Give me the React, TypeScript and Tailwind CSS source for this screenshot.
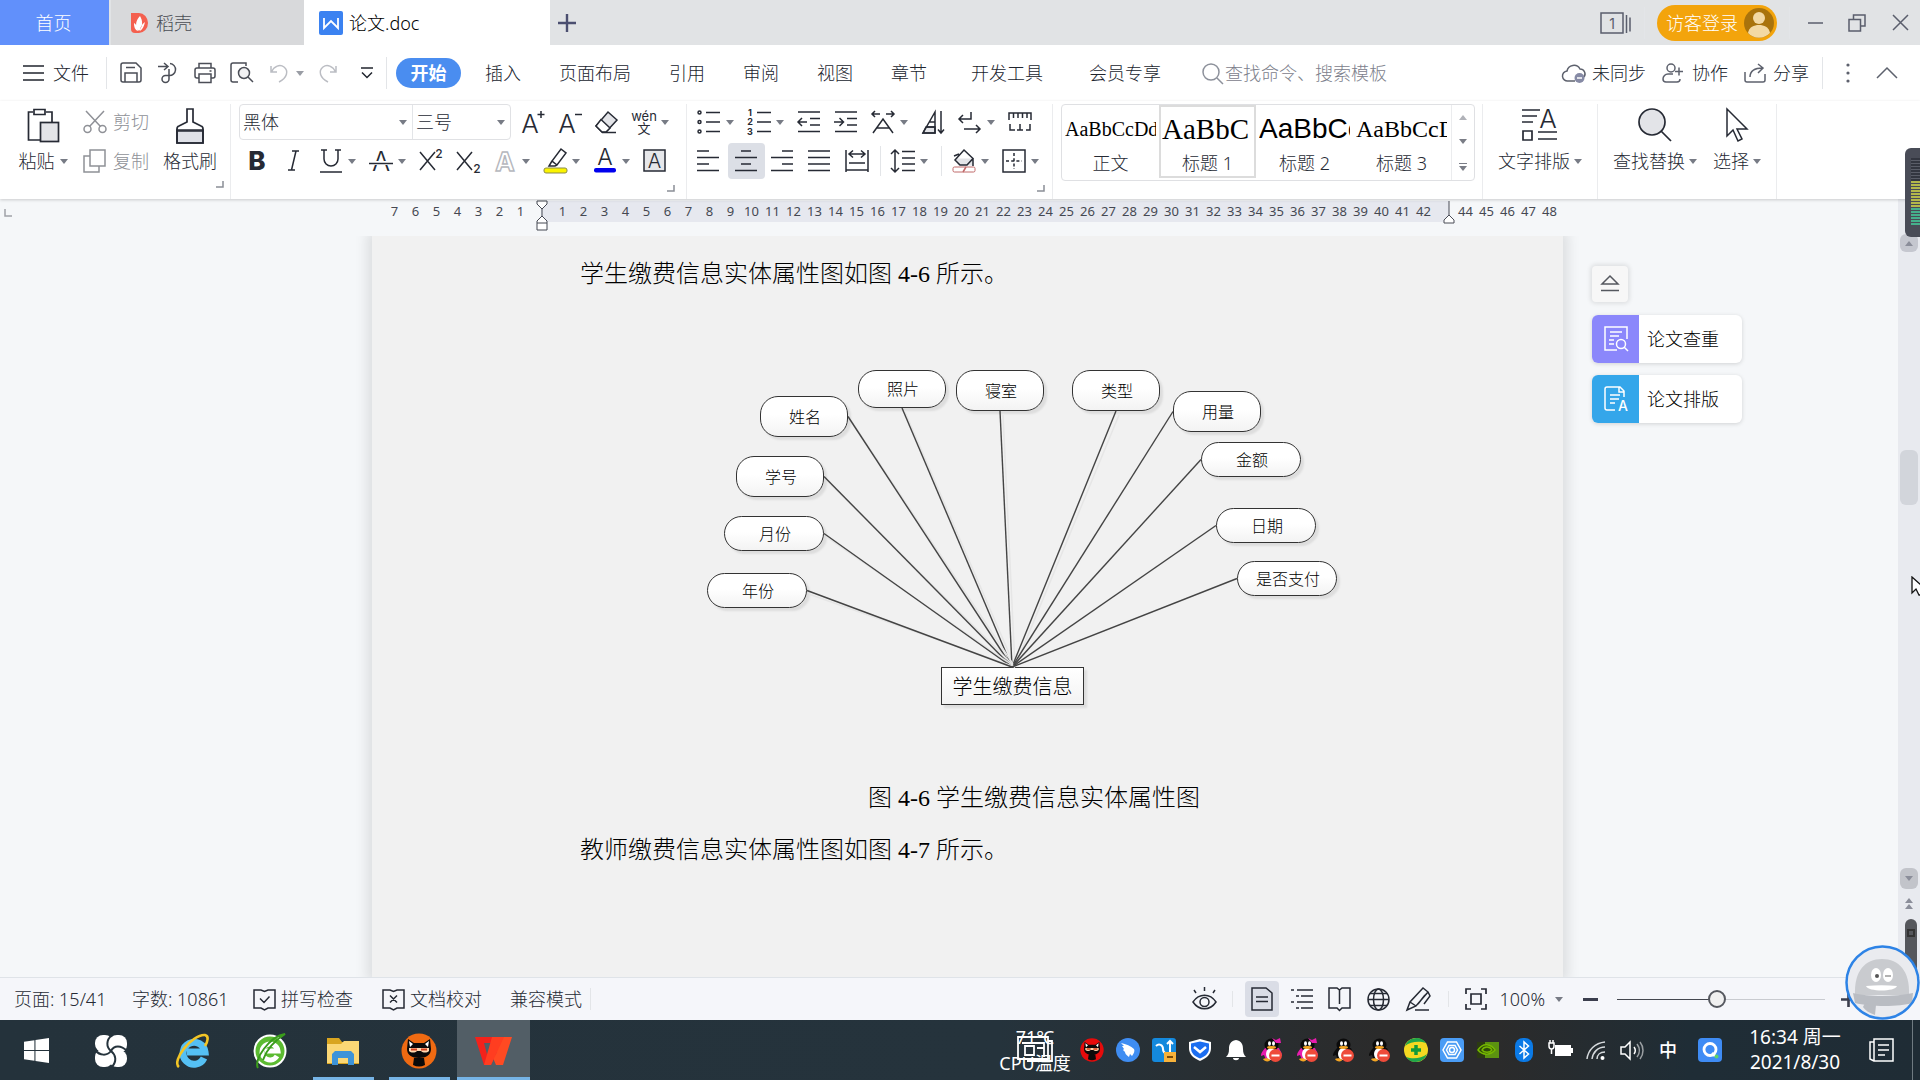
import React, { useState } from "react";

type Kids = { children?: React.ReactNode };

/* ---------- small building blocks ---------- */

function Ic({ children, w = 24, h = 24, sw = 1.5, cls = "" }: Kids & { w?: number; h?: number; sw?: number; cls?: string }) {
  return (
    <svg width={w} height={h} viewBox={`0 0 ${w} ${h}`} fill="none" stroke="currentColor" strokeWidth={sw} className={"shrink-0 overflow-visible " + cls} aria-hidden="true">
      {children}
    </svg>
  );
}

function Glyph({ x, y, size, children, weight = 400, family = "Inter", color = "currentColor", italic = false, anchor = "middle" }: Kids & {
  x: number; y: number; size: number; weight?: number; family?: string; color?: string; italic?: boolean; anchor?: "middle" | "start";
}) {
  return (
    <text x={x} y={y} fontSize={size} fontWeight={weight} fontFamily={`${family}, 'Noto Sans CJK SC', sans-serif`} fill={color} stroke="none" textAnchor={anchor} fontStyle={italic ? "italic" : "normal"}>
      {children}
    </text>
  );
}

function Caret({ cls = "text-[#777b85]" }: { cls?: string }) {
  return (
    <svg width="8" height="5" viewBox="0 0 8 5" className={"shrink-0 " + cls} aria-hidden="true">
      <path d="M0 0h8L4 5z" fill="currentColor" />
    </svg>
  );
}

function Tool({ label, children, caret = false, active = false }: Kids & { label: string; caret?: boolean; active?: boolean }) {
  return (
    <button
      type="button"
      aria-label={label}
      aria-pressed={active}
      className={"flex h-9 shrink-0 items-center gap-[5px] rounded-sm pl-[6px] " + (caret ? "w-[50px] " : "w-[37px] ") + (active ? "bg-[#dcdfe6]" : "")}
    >
      {children}
      {caret && <Caret />}
    </button>
  );
}

function Launcher() {
  return (
    <button type="button" aria-label="更多设置" className="text-[#8b8e96]">
      <Ic w={8} h={7} sw={1.5}><path d="M7 0v6H0" /></Ic>
    </button>
  );
}

function Sep({ cls }: { cls: string }) {
  return <span className={"w-px shrink-0 bg-[#e3e5e8] " + cls} />;
}

/* ---------- title bar ---------- */

function TitleBar() {
  return (
    <header className="flex h-[45px] shrink-0 bg-[#e1e3e5]">
      <button type="button" className="w-[109px] bg-[#6190fb] pr-[2px] text-white">首页</button>
      <button type="button" className="ml-[2px] flex w-[193px] items-center gap-2 bg-[#d8d9db] pl-[19px] text-[#4a4d55]">
        <Ic w={18} h={22}>
          <path d="M1 1h8a9 10 0 0 1 0 20H5a4 4 0 0 1-4-4z" fill="#f4604f" stroke="none" />
          <path d="M9 19C5 15 5 9 10 4c3 5 3 10-1 15zM8 19c-3-1-4-4-4-8 2 1 3 3 4 8zM10 19c3-2 4-5 5-9-3 2-5 5-5 9z" fill="#fff" stroke="none" />
        </Ic>
        稻壳
      </button>
      <button type="button" className="flex w-[246px] items-center gap-[6px] bg-white pl-[15px] text-black">
        <Ic w={24} h={24} sw={1.8}>
          <rect width="24" height="24" rx="2" fill="#3b82f1" stroke="none" />
          <path d="M5 7v10l7-7 7 7V7" stroke="#fff" />
        </Ic>
        论文.doc
      </button>
      <button type="button" aria-label="新建标签" className="ml-2 text-[#4b4f70]">
        <Ic w={18} h={18} sw={2.4}><path d="M9 0v18M0 9h18" /></Ic>
      </button>
      <div className="ml-auto flex items-center text-[#5a5e6c]">
        <button type="button" aria-label="窗口列表" className="mr-[13px]">
          <Ic w={31} h={22}>
            <path d="M1 1h22v20H1zM26.500 3v18M30 5.500v14" />
            <Glyph x={12} y={16.500} size={14}>1</Glyph>
          </Ic>
        </button>
        <Sep cls="h-8 bg-[#d3d5d8]" />
        <button type="button" className="ml-3 flex h-9 w-[120px] items-center gap-[6px] rounded-full bg-[#f3a40c] pl-[9px] text-white">
          访客登录
          <Ic w={30} h={30}>
            <circle cx="15" cy="15" r="15" fill="#a9730c" stroke="none" />
            <circle cx="15" cy="10" r="6" fill="#f3d9a4" stroke="none" />
            <path d="M4 25c1-6 6-8 11-8s10 2 11 8a15 15 0 0 1-22 0z" fill="#f3d9a4" stroke="none" />
          </Ic>
        </button>
        <Sep cls="ml-3 h-8 bg-[#d3d5d8]" />
        <button type="button" aria-label="最小化" className="ml-[18px]"><Ic w={16} h={18}><path d="M0 9h15" /></Ic></button>
        <button type="button" aria-label="还原" className="ml-6"><Ic w={18} h={18}><path d="M1 5.500h11.500V17H1zM5.500 5.500V1H17v11h-4.500" /></Ic></button>
        <button type="button" aria-label="关闭" className="mr-[11px] ml-[26px]"><Ic w={17} h={17}><path d="M1 1l15 15M16 1L1 16" /></Ic></button>
      </div>
    </header>
  );
}

/* ---------- menu row ---------- */

const menus: [string, string][] = [
  ["插入", "ml-6"], ["页面布局", "ml-[38px]"], ["引用", "ml-[38px]"], ["审阅", "ml-[38px]"], ["视图", "ml-[38px]"],
  ["章节", "ml-[38px]"], ["开发工具", "ml-[44px]"], ["会员专享", "ml-[46px]"],
];

function MenuRow() {
  return (
    <nav className="flex h-14 shrink-0 items-center bg-white text-[#20242e]">
      <button type="button" className="ml-[23px] flex items-center gap-[9px]">
        <Ic w={21} h={18}><path d="M0 2h21M0 9h21M0 16h21" /></Ic>文件
      </button>
      <Sep cls="ml-[17px] h-8" />
      <div className="flex items-center gap-[14px] pl-[13px] text-[#4b4e57]">
        <button type="button" aria-label="保存">
          <Ic w={22} h={22}><path d="M4 1h12l5 5v12a2 2 0 0 1-2 2H3a2 2 0 0 1-2-2V3a2 2 0 0 1 2-2zM5 20v-9h12v9M6 5.500h9" /></Ic>
        </button>
        <button type="button" aria-label="输出为PDF">
          <Ic w={24} h={22}><path d="M2 4.500h9M8 1l4 3.500L8 8M14 1.500a6 6 0 1 1-1 12H9.500a3.500 3.500 0 1 0 3.500 3.500V7" /></Ic>
        </button>
        <button type="button" aria-label="打印">
          <Ic w={22} h={22}><path d="M5 6V1.500h12V6M5 16H3a2 2 0 0 1-2-2V8a2 2 0 0 1 2-2h16a2 2 0 0 1 2 2v6a2 2 0 0 1-2 2h-2M5 12h12v8.500H5zM15.500 9h2" /></Ic>
        </button>
        <button type="button" aria-label="打印预览">
          <Ic w={24} h={22}><path d="M8 20H3a2 2 0 0 1-2-2V3a2 2 0 0 1 2-2h13v3M18 15l5 5" /><circle cx="14" cy="11" r="5.500" fill="#f1f1f3" /></Ic>
        </button>
      </div>
      <button type="button" aria-label="撤销" className="ml-4 flex items-center gap-[8px] text-[#bbbdc3]">
        <Ic w={18} h={20}><path d="M1 3v6h6M1.500 9C4 3 10 1 14 4c5 4 3 11-5 15" /></Ic><Caret cls="text-[#9a9da5]" />
      </button>
      <button type="button" aria-label="恢复" className="ml-[15px] text-[#bbbdc3]">
        <Ic w={18} h={20}><path d="M17 3v6h-6M16.500 9C14 3 8 1 4 4c-5 4-3 11 5 15" /></Ic>
      </button>
      <button type="button" aria-label="自定义快速访问工具栏" className="ml-6"><Ic w={12} h={12}><path d="M0 1h12M1 5.500l5 5 5-5" /></Ic></button>
      <Sep cls="ml-[13px] h-8" />
      <button type="button" className="ml-[9px] h-[30px] w-[65px] rounded-full bg-[#4a8df0] font-bold text-white">开始</button>
      {menus.map(([m, c]) => <button key={m} type="button" className={"shrink-0 " + c}>{m}</button>)}
      <label className="ml-[41px] flex min-w-0 flex-1 items-center gap-[2px] text-[#8d919b]">
        <Ic w={21} h={21}><circle cx="9" cy="9" r="8" /><path d="M15 15l6 6" /></Ic>
        <span className="sr-only">查找</span>
        <input placeholder="查找命令、搜索模板" className="w-full min-w-0 bg-transparent outline-none placeholder:text-[#7c808b]" />
      </label>
      <button type="button" className="ml-auto flex shrink-0 items-center gap-[6px]">
        <Ic w={24} h={20}>
          <path d="M13 18H6A5 5 0 0 1 5 8a7 7 0 0 1 13-2 5 5 0 0 1 4 8" stroke="#5d616d" />
          <circle cx="17.500" cy="15" r="5" fill="#868aa5" stroke="none" /><path d="M15 15h5" stroke="#fff" />
        </Ic>未同步
      </button>
      <button type="button" className="ml-4 flex shrink-0 items-center gap-2">
        <Ic w={22} h={20} cls="text-[#5d616d]"><circle cx="9" cy="5" r="4" /><path d="M17 4.500v8M13 8.500h8M11 11H6a5 5 0 0 0-5 5c0 2 1 3 3 3h11a3 3 0 0 0 3-3" /></Ic>协作
      </button>
      <button type="button" className="ml-4 flex shrink-0 items-center gap-[7px]">
        <Ic w={22} h={20} cls="text-[#5d616d]"><path d="M1 9v8a2 2 0 0 0 2 2h16a2 2 0 0 0 2-2v-6M6 14c0-6 4-9 13-9M14 1l5 4-5 5" /></Ic>分享
      </button>
      <Sep cls="ml-[13px] h-8" />
      <button type="button" aria-label="更多" className="ml-[23px]">
        <svg width="4" height="20" viewBox="0 0 4 20" fill="#5d616d" aria-hidden="true"><circle cx="2" cy="2" r="1.600" /><circle cx="2" cy="10" r="1.600" /><circle cx="2" cy="18" r="1.600" /></svg>
      </button>
      <button type="button" aria-label="收起功能区" className="mr-[22px] ml-[26px] text-[#5d616d]"><Ic w={22} h={12}><path d="M1 11L11 1l10 10" /></Ic></button>
    </nav>
  );
}

/* ---------- ribbon ---------- */

function Lines({ rows }: { rows: [number, number][] }) {
  return <path d={rows.map(([a, b], i) => `M${a} ${2 + i * 6.500}H${b}`).join("")} />;
}

const samples: { text: string; label: string; cls: string }[] = [
  { text: "AaBbCcDd", label: "正文", cls: "font-[Liberation_Serif] text-[20px]" },
  { text: "AaBbC", label: "标题 1", cls: "font-[Liberation_Serif] text-[29px]" },
  { text: "AaBbCc", label: "标题 2", cls: "font-[Liberation_Sans] text-[28px]" },
  { text: "AaBbCcD", label: "标题 3", cls: "font-[Liberation_Serif] text-[24px]" },
];

function FontPick({ label, value, options, w }: { label: string; value: string; options: string[]; w: string }) {
  return (
    <label className={"relative flex h-full items-center " + w}>
      <span className="sr-only">{label}</span>
      <select defaultValue={value} className="h-full w-full appearance-none bg-transparent pl-[3px] outline-none">
        {options.map((o) => <option key={o}>{o}</option>)}
      </select>
      <span className="pointer-events-none absolute right-[5px]"><Caret /></span>
    </label>
  );
}

function Ribbon() {
  const [style, setStyle] = useState("标题 1");
  return (
    <section className="z-10 flex h-[98px] shrink-0 bg-white pt-[3px] text-[#262a34] shadow-[0_1px_3px_rgba(0,0,0,0.18)]">
      {/* clipboard */}
      <div className="flex w-[231px] shrink-0 border-r border-[#ebecee]">
        <button type="button" className="ml-[18px] flex w-[50px] flex-col items-center pt-1">
          <Ic w={34} h={36} sw={1.700}>
            <path d="M7 4H2.500v28H14M20 4h6v10M8 1.500h11v5H8z" /><rect x="14.500" y="14.500" width="18" height="19" fill="#e3e4e8" />
          </Ic>
          <span className="flex items-center gap-[5px] whitespace-nowrap pt-[5px]">粘贴<Caret /></span>
        </button>
        <div className="ml-[15px] flex flex-col gap-[3px] text-[#8f9197]">
          <button type="button" className="flex h-9 items-center gap-[6px]">
            <Ic w={24} h={24}><circle cx="4.500" cy="19" r="3.500" /><circle cx="19.500" cy="19" r="3.500" /><path d="M3 1l14.500 15.500M21 1L6.500 16.500" /></Ic>剪切
          </button>
          <button type="button" className="flex h-9 items-center gap-[6px]">
            <Ic w={24} h={24}><path d="M7 1h15v16H7zM7 7H1v16h15v-6" /></Ic>复制
          </button>
        </div>
        <button type="button" className="ml-[14px] flex flex-col items-center pt-1">
          <Ic w={28} h={36} sw={1.700}>
            <path d="M1 22h26v13H1z" fill="#dfe1e8" /><path d="M11 1h6v13l8 4a3 3 0 0 1 2 3v14H1V21a3 3 0 0 1 2-3l8-4zM1 23h26" />
          </Ic>
          <span className="pt-[5px]">格式刷</span>
        </button>
        <div className="-ml-px self-end pb-[6px]"><Launcher /></div>
      </div>

      {/* font */}
      <div className="w-[456px] shrink-0 border-r border-[#ebecee] pl-2">
        <div className="flex">
          <div className="flex h-9 w-[272px] rounded-sm border border-[#e0e1e4]">
            <FontPick label="字体" value="黑体" options={["黑体", "宋体"]} w="w-[172px]" />
            <Sep cls="h-full" />
            <FontPick label="字号" value="三号" options={["三号", "四号"]} w="flex-1" />
          </div>
          <span className="w-1" />
          <Tool label="增大字号"><Ic><Glyph x={9} y={23} size={26} weight={300}>A</Glyph><path d="M20 1v7M16.500 4.500h7" /></Ic></Tool>
          <Tool label="减小字号"><Ic><Glyph x={9} y={23} size={26} weight={300}>A</Glyph><path d="M17 4.500h7" /></Ic></Tool>
          <Tool label="清除格式"><Ic><path d="M13 2l9 8-11 12H7l-6-6z" fill="#e3e4e8" /><path d="M6 9.500l9 8.500-4 4H7l-6-6z" fill="#fff" /><path d="M7 22.500h14" /></Ic></Tool>
          <Tool label="拼音指南" caret>
            <span className="flex w-6 flex-col items-center text-[13px] leading-3 font-normal"><span className="font-[Inter]">wén</span><span>文</span></span>
          </Tool>
        </div>
        <div className="mt-[3px] flex">
          <Tool label="加粗"><Ic><Glyph x={12} y={21} size={26} weight={800}>B</Glyph></Ic></Tool>
          <Tool label="倾斜"><Ic><path d="M10 2h7M6 21h7M14 2L9.500 21" /></Ic></Tool>
          <Tool label="下划线" caret><Ic><path d="M5 1v9a7 7 0 0 0 14 0V1M2 1h6M16 1h6M1 23h22" /></Ic></Tool>
          <Tool label="删除线" caret><Ic><Glyph x={12} y={22} size={27} weight={300}>A</Glyph><rect x="3" y="12" width="18" height="4" fill="#fff" stroke="none" /><path d="M0 14.500h24" /></Ic></Tool>
          <Tool label="上标"><Ic><path d="M1 3l15 18M16 3L1 21" /><Glyph x={20} y={9} size={12} weight={500}>2</Glyph></Ic></Tool>
          <Tool label="下标"><Ic><path d="M1 3l15 18M16 3L1 21" /><Glyph x={21} y={24} size={12} weight={500}>2</Glyph></Ic></Tool>
          <Tool label="文字效果" caret><Ic cls="text-[#b5b7bd]"><text x="12" y="22" fontSize="26" fontWeight="700" fontFamily="Inter, sans-serif" textAnchor="middle" fill="#fff" stroke="currentColor" strokeWidth="1.400">A</text></Ic></Tool>
          <Tool label="突出显示" caret><Ic><path d="M18 0l5 4-9 12-5-4zM9 12l-3 5h6l2-1" /><rect x="1" y="19" width="23" height="5" rx="2" fill="#fbf400" stroke="#8b8b4a" strokeWidth="1" /></Ic></Tool>
          <Tool label="字体颜色" caret><Ic><Glyph x={12} y={16} size={23} weight={300}>A</Glyph><rect x="1" y="19" width="22" height="4.500" rx="2" fill="#0000ee" stroke="none" /></Ic></Tool>
          <Tool label="字符底纹"><Ic><rect x="1" y="1" width="21" height="21" fill="#e6e7ea" /><Glyph x={11.500} y={19} size={20} weight={300}>A</Glyph></Ic></Tool>
        </div>
        <div className="flex justify-end pr-[11px] pt-[6px]"><Launcher /></div>
      </div>

      {/* paragraph */}
      <div className="w-[366px] shrink-0 border-r border-[#ebecee] pl-1">
        <div className="flex">
          <Tool label="项目符号" caret><Ic><circle cx="2.500" cy="2.500" r="1.500" /><circle cx="2.500" cy="12" r="1.500" /><circle cx="2.500" cy="21.500" r="1.500" /><path d="M9 2.500h14M9 12h14M9 21.500h14" /></Ic></Tool>
          <Tool label="编号" caret><Ic><Glyph x={3} y={6} size={9} weight={700}>1</Glyph><Glyph x={3} y={15} size={9} weight={700}>2</Glyph><Glyph x={3} y={25} size={9} weight={700}>3</Glyph><path d="M10 2.500h14M10 12h14M10 21.500h14" /></Ic></Tool>
          <Tool label="减少缩进"><Ic><path d="M1 2h22M13 8.500h10M13 15h10M1 21.500h22M1 12h9M5 8l-4 4 4 4" /></Ic></Tool>
          <Tool label="增加缩进"><Ic><path d="M1 2h22M13 8.500h10M13 15h10M1 21.500h22M0 12h9M5.500 8l4 4-4 4" /></Ic></Tool>
          <Tool label="中文版式" caret><Ic><path d="M1 4h8M4 1L1 4l3 3M15 4h8M20 1l3 3-3 3M2 23L12 9l10 14M6 18h12" /></Ic></Tool>
          <Tool label="排序"><Ic><path d="M5 17h9v6H2z" fill="#e3e4e8" /><path d="M14 2v21H2zM8.500 12H14M5 17h9M20 1v22M17 19.500l3 3.500 3-3.500" /></Ic></Tool>
          <Tool label="换行" caret><Ic><path d="M13 2v7H1M5 5L1 9l4 4M6 19h16M18 15l4 4-4 4" /></Ic></Tool>
          <Tool label="标尺"><Ic><path d="M1 10V3h22v7M5.500 3v5M10 3v5M14.500 3v5M19 3v5M2 14v6h5M12 14v6M9 20h6M22 14v6h-4" /></Ic></Tool>
        </div>
        <div className="mt-[3px] flex items-center">
          <Tool label="左对齐"><Ic><Lines rows={[[0, 12], [0, 22], [0, 12], [0, 22]]} /></Ic></Tool>
          <Tool label="居中对齐" active><Ic><Lines rows={[[7, 17], [1, 23], [7, 17], [1, 23]]} /></Ic></Tool>
          <Tool label="右对齐"><Ic><Lines rows={[[11, 22], [0, 22], [11, 22], [0, 22]]} /></Ic></Tool>
          <Tool label="两端对齐"><Ic><Lines rows={[[0, 22], [0, 22], [0, 22], [0, 22]]} /></Ic></Tool>
          <Tool label="分散对齐"><Ic><path d="M1 1v22M23 1v22M4 5h16M8 1.500L4 5l4 3.500M16 1.500L20 5l-4 3.500M4 14h16M1 21h22" /></Ic></Tool>
          <Sep cls="mx-1 h-[30px]" />
          <Tool label="行距" caret><Ic><path d="M4 1v22M0 5l4-4 4 4M0 19l4 4 4-4M11 2.500h13M11 9h13M11 15h13M11 21.500h13" /></Ic></Tool>
          <Sep cls="mr-1 ml-[6px] h-[30px]" />
          <Tool label="底纹颜色" caret><Ic><path d="M4 9.500h17v7H6z" fill="#e3e4e8" stroke="none" /><path d="M12 1l9 8.500-6 6.500H8L3 11zM2 7l5-2M21 9v8" /><rect x="1" y="18" width="22" height="5" rx="1.500" fill="#fff" stroke="#c06a6a" strokeWidth="1" /><path d="M11 23l3-5" stroke="#c06a6a" /></Ic></Tool>
          <Tool label="边框" caret><Ic><rect x="1" y="1" width="22" height="22" /><path d="M12 4v16M4 12h16" strokeDasharray="3 2.200" /></Ic></Tool>
        </div>
        <div className="flex justify-end pr-[7px] pt-[6px]"><Launcher /></div>
      </div>

      {/* styles */}
      <div className="w-[430px] shrink-0 border-r border-[#ebecee] pl-2">
        <div className="flex h-[77px] w-[414px] rounded-sm border border-[#dfe0e3]">
          {samples.map((s) => (
            <button
              key={s.label}
              type="button"
              aria-pressed={style === s.label}
              onClick={() => setStyle(s.label)}
              className={"flex h-[73px] w-[97px] shrink-0 flex-col items-center border-2 " + (style === s.label ? "border-[#dcdcdc]" : "border-transparent")}
            >
              <span className={"flex h-11 w-[91px] items-center overflow-hidden font-normal whitespace-nowrap text-black " + s.cls}>{s.text}</span>
              <span className="leading-6">{s.label}</span>
            </button>
          ))}
          <div className="ml-auto flex w-[23px] flex-col items-center justify-around border-l border-[#ebecee] text-[#7a7d86]">
            <button type="button" aria-label="上一行" className="rotate-180 text-[#b0b2b8]"><Caret cls="" /></button>
            <button type="button" aria-label="下一行"><Caret cls="" /></button>
            <button type="button" aria-label="展开样式" className="flex flex-col items-center gap-[2px]"><span className="h-px w-2 bg-[#7a7d86]" /><Caret cls="" /></button>
          </div>
        </div>
      </div>

      <div className="flex w-[115px] shrink-0 justify-center border-r border-[#ebecee]">
        <button type="button" className="flex flex-col items-center pt-1">
          <Ic w={36} h={34} sw={1.700}><path d="M0 2h18M0 8h15M0 14h11M1 23h9v9H1zM16 24h19M16 31h19" /><Glyph x={26} y={20} size={26} weight={300}>A</Glyph></Ic>
          <span className="flex items-center gap-1 pt-[7px]">文字排版<Caret /></span>
        </button>
      </div>
      <div className="flex w-[179px] shrink-0 border-r border-[#ebecee]">
        <button type="button" className="ml-[15px] flex flex-col items-center pt-1">
          <Ic w={34} h={34} sw={1.700}><circle cx="14" cy="14" r="13" fill="#e3e4e8" /><path d="M23 23l10 10" /></Ic>
          <span className="flex items-center gap-1 pt-[7px]">查找替换<Caret /></span>
        </button>
        <button type="button" className="ml-4 flex flex-col items-center pt-1">
          <Ic w={24} h={34}><path d="M2 1v27l6-6 5 11 4-2-5-10h10z" /></Ic>
          <span className="flex items-center gap-1 pt-[7px]">选择<Caret /></span>
        </button>
      </div>
    </section>
  );
}

/* ---------- ruler ---------- */

function Num({ n }: { n: number | string }) {
  return <span className="flex w-[21px] shrink-0 justify-center">{n}</span>;
}

function Ruler() {
  const left = [7, 6, 5, 4, 3, 2, 1];
  const body = Array.from({ length: 42 }, (_, i) => i + 1);
  return (
    <div className="flex h-[37px] shrink-0 items-start overflow-hidden pt-[2px] font-[Noto_Sans] text-[13px] leading-[21px] font-normal text-[#454852]">
      <span className="flex w-[384px] shrink-0 pt-2 pl-1 text-[#a0a2a8]"><Ic w={8} h={8}><path d="M1 0v7h7" /></Ic></span>
      {left.map((n) => <Num key={n} n={n} />)}
      <span className="flex h-[21px] w-[21px] shrink-0 justify-center bg-linear-to-r from-transparent from-50% to-[#e6e8ef] to-50%">
        <Ic w={12} h={30} sw={1}><path d="M1 0h10v3L6 8 1 3zM6 8v7M1 20l5-5 5 5v9H1zM1 22h10" fill="#fff" /></Ic>
      </span>
      <div className="flex h-[21px] bg-[#e6e8ef]">
        {body.map((n) => <Num key={n} n={n} />)}
        <span className="flex w-[15px] shrink-0" />
      </div>
      <span className="-ml-[6px] flex w-3 shrink-0 text-[#4a4d57]"><Ic w={12} h={22} sw={1}><path d="M6 0v14M1 19l5-5 5 5v3H1z" fill="#fff" /></Ic></span>
      {[44, 45, 46, 47, 48].map((n) => <Num key={n} n={n} />)}
    </div>
  );
}

/* ---------- diagram ---------- */

type Node = { t: string; x: number; y: number; w: number; h: number; from: "r" | "b" | "l" };
const nodes: Node[] = [
  { t: "照片", x: 158, y: 9, w: 88, h: 38, from: "b" },
  { t: "寝室", x: 256, y: 9, w: 88, h: 41, from: "b" },
  { t: "类型", x: 372, y: 9, w: 88, h: 41, from: "b" },
  { t: "姓名", x: 60, y: 35, w: 88, h: 41, from: "r" },
  { t: "用量", x: 473, y: 30, w: 88, h: 41, from: "l" },
  { t: "学号", x: 36, y: 95, w: 88, h: 41, from: "r" },
  { t: "金额", x: 501, y: 81, w: 100, h: 35, from: "l" },
  { t: "月份", x: 24, y: 155, w: 100, h: 35, from: "r" },
  { t: "日期", x: 516, y: 147, w: 100, h: 35, from: "l" },
  { t: "年份", x: 7, y: 212, w: 100, h: 35, from: "r" },
  { t: "是否支付", x: 537, y: 200, w: 100, h: 35, from: "l" },
];

function Diagram() {
  return (
    <figure className="relative mt-[69px] ml-[328px] h-[350px] w-[640px] font-[Noto_Sans_CJK_SC] text-[16px] text-black">
      {nodes.map((n) => (
        <div
          key={n.t}
          style={{ left: n.x, top: n.y, width: n.w, height: n.h }}
          className="absolute flex items-center justify-center rounded-[18px] border border-[#333] bg-linear-to-b from-white from-45% to-[#f3f3f3] pb-[2px] pl-[2px] shadow-[3px_3px_2px_#dddddd]"
        >
          {n.t}
        </div>
      ))}
      <div className="absolute top-[306px] left-[241px] flex h-[38px] w-[143px] items-center justify-center border border-[#333] bg-linear-to-b from-white to-[#f3f3f3] text-[20px] shadow-[3px_3px_2px_#dddddd]">
        学生缴费信息
      </div>
      <svg width="640" height="350" viewBox="0 0 640 350" className="pointer-events-none absolute inset-0" aria-hidden="true">
        {nodes.map((n) => {
          const x = n.from === "r" ? n.x + n.w : n.from === "l" ? n.x : n.x + n.w / 2;
          const y = n.from === "b" ? n.y + n.h : n.y + n.h / 2;
          return (
            <g key={n.t}>
              {n.from !== "l" && <path d={`M${x + 3} ${y + 4}L315 306`} stroke="#e6e6e6" strokeWidth="1.500" />}
              <path d={`M${x} ${y}L312 306`} stroke="#444" strokeWidth="1.400" />
            </g>
          );
        })}
      </svg>
    </figure>
  );
}

/* ---------- work area ---------- */

function Workspace() {
  return (
    <main className="relative flex min-h-0 flex-1 bg-[#f5f7f9]">
      <div className="flex min-w-0 flex-1 flex-col">
        <Ruler />
        <div className="flex min-h-0 flex-1 overflow-hidden">
          <div className="w-[372px] shrink-0" />
          <article className="min-w-0 flex-1 bg-[#f1f1f1] pt-5 font-[Liberation_Serif,Noto_Sans_CJK_SC,serif] text-[24px] leading-9 font-light text-black shadow-[0_0_12px_5px_rgba(0,0,0,0.10)]">
            <p className="pl-[208px]">学生缴费信息实体属性图如图 <span className="font-normal">4-6</span> 所示。</p>
            <Diagram />
            <p className="mt-[69px] pl-[496px]">图 <span className="font-normal">4-6</span> 学生缴费信息实体属性图</p>
            <p className="mt-4 pl-[208px]">教师缴费信息实体属性图如图 <span className="font-normal">4-7</span> 所示。</p>
          </article>
          <aside className="flex w-[335px] shrink-0 flex-col items-start pt-[30px] pl-[29px] text-black">
            <button type="button" aria-label="收起" className="flex h-9 w-9 items-center justify-center rounded-sm bg-[#f7f7f7] text-[#55585f] shadow-[0_0_4px_2px_rgba(0,0,0,0.09)]">
              <Ic w={18} h={18}><path d="M9 1l8 8H1zM0 15.500h18" /></Ic>
            </button>
            <button type="button" className="mt-[13px] flex h-12 w-[150px] items-center overflow-hidden rounded-md bg-white shadow-[0_1px_4px_rgba(0,0,0,0.15)]">
              <span className="flex h-full w-[47px] items-center justify-center bg-[#8b87fb] text-white">
                <Ic w={24} h={26}><path d="M13 24H1V1h22v12M6 6h12M6 10h9M5 14h5M5 18h5M20 21l4 4" /><circle cx="17" cy="18" r="4.500" /></Ic>
              </span>
              <span className="pl-2">论文查重</span>
            </button>
            <button type="button" className="mt-3 flex h-12 w-[150px] items-center overflow-hidden rounded-md bg-white shadow-[0_1px_4px_rgba(0,0,0,0.15)]">
              <span className="flex h-full w-[47px] items-center justify-center bg-[#34a6ea] text-white">
                <Ic w={24} h={26}><path d="M11 24H3a2 2 0 0 1-2-2V3a2 2 0 0 1 2-2h13l4 4v6M15 1v5h5M6 9h10M6 13h9M6 17h5" /><Glyph x={19} y={25} size={14} weight={500} color="#fff">A</Glyph></Ic>
              </span>
              <span className="pl-2">论文排版</span>
            </button>
          </aside>
        </div>
      </div>

      {/* vertical scroll track */}
      <div className="flex w-[22px] shrink-0 flex-col items-center bg-[#e8eaef] pt-[35px] text-[#8b8e9a]">
        <button type="button" aria-label="向上滚动" className="flex h-[18px] w-[18px] items-center justify-center rounded-md bg-[#c5c7cf]"><span className="rotate-180"><Caret cls="" /></span></button>
        <span className="mt-[198px] h-[55px] w-[18px] rounded-md bg-[#d2d5db]" />
        <button type="button" aria-label="向下滚动" className="mt-auto flex h-[21px] w-[18px] items-center justify-center rounded-md bg-[#c2c4ca]"><Caret cls="" /></button>
        <button type="button" aria-label="上一页" className="mt-[9px] mb-[68px] flex rotate-180 flex-col gap-px"><Caret cls="" /><Caret cls="" /></button>
      </div>

      {/* level meter that hangs over the window edge */}
      <div className="absolute -top-[51px] right-0 z-20 flex h-[89px] w-[15px] flex-col items-end rounded-l-md bg-[#494c57] pt-[10px]">
        <span className="h-[23px] w-[9px] bg-[repeating-linear-gradient(#333640_0_2px,#5a5d68_2px_3px)]" />
        <span className="h-[27px] w-[9px] bg-[repeating-linear-gradient(#b3b84a_0_2px,#494c57_2px_3px)]" />
        <span className="h-[18px] w-[9px] bg-[repeating-linear-gradient(#45b08c_0_2px,#494c57_2px_3px)]" />
      </div>
      <div className="absolute right-[3px] bottom-0 h-[58px] w-3 rounded-t-md bg-[#55575c]">
        <span className="mx-auto mt-[10px] block h-2 w-2 border-2 border-[#333]" />
      </div>
      <svg width="9" height="20" viewBox="0 0 9 20" className="absolute top-[377px] right-0" aria-hidden="true">
        <path d="M1 1v16l4-4 3 6h2V9z" fill="#fff" stroke="#111" strokeWidth="1.300" />
      </svg>
    </main>
  );
}

/* ---------- status bar ---------- */

function StatusBar() {
  return (
    <footer className="relative flex h-[43px] shrink-0 items-center border-t border-[#dfe3e8] bg-[#f5f6fa] text-[#262a34]">
      <button type="button" className="ml-[14px] w-[118px] shrink-0 text-left">页面: 15/41</button>
      <button type="button" className="w-[121px] shrink-0 text-left">字数: 10861</button>
      <button type="button" className="flex w-[129px] shrink-0 items-center gap-[5px]">
        <Ic w={23} h={23}><path d="M8 2H1v18h7l3.500 2L15 20h7V2h-7l-3.500 1.500zM7 10.500l4 4 5.500-6" /></Ic>拼写检查
      </button>
      <button type="button" className="flex w-[128px] shrink-0 items-center gap-[5px]">
        <Ic w={23} h={23}><path d="M8 2H1v18h7l3.500 2L15 20h7V2h-7l-3.500 1.500zM8 7.500l7 7M15 7.500l-7 7" /></Ic>文档校对
      </button>
      <span className="shrink-0">兼容模式</span>
      <Sep cls="ml-2 h-[22px]" />

      <div className="ml-auto flex shrink-0 items-center">
        <button type="button" aria-label="护眼模式"><Ic w={25} h={24}><path d="M1 15c6-9 17-9 23 0-6 9-17 9-23 0zM12.500 0v4M2 3l2 3M23 3l-2 3" /><circle cx="12.500" cy="15" r="4.500" /></Ic></button>
        <Sep cls="ml-[15px] h-[16px]" />
        <button type="button" aria-label="页面视图" aria-pressed="true" className="ml-3 flex h-9 w-[34px] items-center justify-center rounded-sm bg-[#dadde6]"><Ic w={22} h={24}><path d="M1 1h14l6 5v17H1zM5 10h12M5 14.500h12" /></Ic></button>
        <button type="button" aria-label="大纲" className="ml-[12px]"><Ic w={22} h={22} sw={1.600}><path d="M0 2h3M6 2h16M5 8h3M10 8h12M0 14h3M6 14h16M5 20h3M10 20h12" /></Ic></button>
        <button type="button" aria-label="阅读版式" className="ml-[15px]"><Ic w={23} h={24}><path d="M9 1H1v20h8l2.500 2.500L14 21h8V1h-8l-2.500 2zM11.500 3v14" /></Ic></button>
        <button type="button" aria-label="Web版式" className="ml-4"><Ic w={23} h={23}><circle cx="11.500" cy="11.500" r="10.500" /><ellipse cx="11.500" cy="11.500" rx="5" ry="10.500" /><path d="M1 11.500h21M3 5.500h17M3 17.500h17" /></Ic></button>
        <button type="button" aria-label="写作模式" className="ml-4"><Ic w={24} h={24}><path d="M1 23l3-8L17 1l5 4-12 14zM4 15l6 4M19 8l-7 9M22 5l2 4-6 8M9 23h14" /></Ic></button>
        <Sep cls="ml-[18px] h-[16px]" />
        <button type="button" aria-label="适合页面" className="ml-4"><Ic w={22} h={22} sw={1.700}><path d="M1 6V1h5M16 1h5v5M21 16v5h-5M6 21H1v-5M6 6h10v10H6z" /></Ic></button>
        <button type="button" className="ml-[13px] flex items-center gap-[10px]">100%<Caret /></button>
        <button type="button" aria-label="缩小" className="ml-[20px] h-[3px] w-[15px] bg-[#3b3e4d]" />
        <label className="relative ml-[19px] flex h-[18px] w-[208px] items-center">
          <span className="sr-only">显示比例</span>
          <input
            type="range"
            defaultValue={48}
            className="h-px w-full appearance-none bg-linear-to-r from-[#44474f] from-48% to-[#c9cbd0] to-48% [&::-webkit-slider-thumb]:h-[18px] [&::-webkit-slider-thumb]:w-[18px] [&::-webkit-slider-thumb]:appearance-none [&::-webkit-slider-thumb]:rounded-full [&::-webkit-slider-thumb]:border-2 [&::-webkit-slider-thumb]:border-solid [&::-webkit-slider-thumb]:border-[#55585f] [&::-webkit-slider-thumb]:bg-[#f0f0f0]"
          />
        </label>
        <button type="button" aria-label="放大" className="mr-[64px] ml-4 text-[#3b3e4d]"><Ic w={15} h={15} sw={2.600}><path d="M0 7.500h15M7.500 0v15" /></Ic></button>
      </div>

      <button type="button" aria-label="助手" className="absolute right-0 bottom-0 z-10">
        <svg width="75" height="75" viewBox="0 0 75 75" aria-hidden="true">
          <circle cx="37.500" cy="37.500" r="36" fill="#eaebef" />
          <path d="M10 50C9 26 20 14 37 14s28 12 27 36z" fill="#c9cbcf" />
          <path d="M8 48c15 4 42 4 60 0l-1 10c-12 4-42 4-57 0z" fill="#b9bcc2" />
          <path d="M20 58c4 2 7 2 11 2l-1 10c-6-2-10-5-12-8z" fill="#b9bcc2" />
          <ellipse cx="31" cy="30" rx="5" ry="7" fill="#fff" /><ellipse cx="43" cy="30" rx="5" ry="7" fill="#fff" />
          <circle cx="32" cy="31" r="2" fill="#555" /><path d="M40 31h6" stroke="#999" strokeWidth="1.500" />
          <path d="M21 41c10-1 21-1 31 0-2 6-29 6-31 0z" fill="#fff" />
          <circle cx="37.500" cy="37.500" r="36" fill="none" stroke="#2d83e6" strokeWidth="2.500" />
        </svg>
      </button>
    </footer>
  );
}

/* ---------- taskbar ---------- */

function Penguin({ pink = false }: { pink?: boolean }) {
  return (
    <Ic>
      <g stroke="none">
        <path d="M1 18c0-4 3-6 4-8h14c1 3 3 4 3 8l-3-1-1 5H6l-2-5z" fill={pink ? "#e81cae" : "#0b0b0b"} />
        <ellipse cx="11.500" cy="7" rx="7" ry="6.500" fill="#0b0b0b" />
        <ellipse cx="11" cy="16" rx="5" ry="6" fill="#fff" />
        <ellipse cx="9.500" cy="5.500" rx="1.500" ry="2.200" fill="#fff" /><ellipse cx="13.500" cy="5.500" rx="1.500" ry="2.200" fill="#fff" />
        <ellipse cx="11.500" cy="9.500" rx="4.500" ry="1.400" fill="#f5a623" />
        <path d="M3 21c2-1 6-1 7 1 0 2-6 2-7-1z" fill="#f5a623" />
        {pink && <path d="M12 0l4 2 4-2 1 5-5 0z" fill="#e81cae" />}
        <circle cx="15.500" cy="17.500" r="6.500" fill="#ee4b3a" />
        <rect x="11.500" y="16.500" width="8" height="2" fill="#fff" />
      </g>
    </Ic>
  );
}

function CatFace({ r, bg }: { r: number; bg: string }) {
  return (
    <svg width={2 * r} height={2 * r} viewBox="0 0 36 36" aria-hidden="true">
      <circle cx="18" cy="18" r="17.500" fill={bg} />
      <path d="M7 6l6 4h10l6-4 1 10c0 6-5 9-12 9S6 22 6 16zM13 25h10l1 7c-4 2-8 2-12 0z" fill="#0a0a0a" />
      <path d="M8 8l4 3-3 3zM28 8l-4 3 3 3z" fill="#fff" />
      <path d="M8 15h20v3c-2 2-6 2-8 0h-4c-2 2-6 2-8 0z" fill="#ffd9b0" />
      <path d="M10 15.500h6v2h-6zM20 15.500h6v2h-6z" fill="#d4401c" />
    </svg>
  );
}

const apps: { name: string; w: string; running?: boolean; active?: boolean; icon: React.ReactNode }[] = [
  { name: "开始", w: "w-[72px]", icon: <svg width="25" height="25" viewBox="0 0 24 24" fill="#fff" aria-hidden="true"><path d="M0 3.500l10-1.400v9.400H0zM11 2l13-2v11.500H11zM0 12.500h10v9.400L0 20.500zM11 12.500h13V24l-13-2z" /></svg> },
  {
    name: "搜索", w: "w-[78px]", icon: (
      <svg width="34" height="34" viewBox="0 0 34 34" fill="#fff" aria-hidden="true">
        <rect x="1" y="1" width="18" height="17" rx="8" /><rect x="15" y="1" width="18" height="18" rx="8" />
        <rect x="1" y="15" width="18" height="18" rx="8" /><rect x="15" y="16" width="18" height="17" rx="8" />
        <circle cx="17" cy="17" r="7" />
        <g fill="none" stroke="#25333c" strokeWidth="2">
          <path d="M17 17c-5-4-5-11 1-16" /><path d="M17 17c3-6 10-6 16 0" /><path d="M17 17c5 4 6 10 1 16" /><path d="M17 17c-4 5-11 5-16-1" />
        </g>
      </svg>
    ),
  },
  {
    name: "Internet Explorer", w: "w-[84px]", icon: (
      <svg width="36" height="36" viewBox="0 0 36 36" fill="none" aria-hidden="true">
        <path d="M30 25a11 11 0 1 1 1-6H13" stroke="#55c0f4" strokeWidth="7" />
        <path d="M5 34C-3 28 18 1 31 2c4 1 3 6 0 11" stroke="#f2c526" strokeWidth="2.600" />
      </svg>
    ),
  },
  {
    name: "360浏览器", w: "w-[71px]", icon: (
      <svg width="36" height="36" viewBox="0 0 36 36" fill="none" aria-hidden="true">
        <circle cx="18" cy="18" r="15.500" fill="#5cbb31" stroke="#fff" strokeWidth="2" />
        <path d="M25 23a8 8 0 1 1 1-5H13" stroke="#fff" strokeWidth="5" />
        <path d="M6 35C1 27 18 3 33 1 22 8 14 18 11 27" stroke="#3a9c1c" strokeWidth="2" />
      </svg>
    ),
  },
  {
    name: "文件资源管理器", w: "w-[76px]", running: true, icon: (
      <svg width="34" height="30" viewBox="0 0 34 30" aria-hidden="true">
        <path d="M1 2h12l3 4h17v22H1z" fill="#d9a520" /><path d="M1 8h14l3-3h15v22H1z" fill="#fbd775" />
        <path d="M6 29V18l3-3h16l3 3v11h-6v-7H12v7z" fill="#3d93d8" />
      </svg>
    ),
  },
  { name: "猫", w: "w-[76px]", running: true, icon: <CatFace r={18} bg="#ef6a12" /> },
  {
    name: "WPS", w: "w-[73px]", running: true, active: true, icon: (
      <svg width="38" height="30" viewBox="0 0 38 30" aria-hidden="true">
        <path d="M0 1h20l-2 6h-9l4 15 8-21h8L16 29H9z" fill="#f3221b" /><path d="M21 18l5-17h11l-9 28h-7l-3-7z" fill="#ff4a22" /><path d="M17 1h12L16 29H9z" fill="#ff3d20" />
      </svg>
    ),
  },
];

function Round({ bg, children }: Kids & { bg: string }) {
  return <Ic><circle cx="12" cy="12" r="12" fill={bg} stroke="none" />{children}</Ic>;
}

const tray: [string, React.ReactNode][] = [
  ["猫盘", <CatFace r={12} bg="#e60b0b" />],
  ["钉钉", <Round bg="#3f8df2"><path d="M5 5c5 1 10 3 13 6 1 2 0 4-2 7l-2-2-1 3c-3-2-4-4-4-5l-2-2 1-1-2-3 2 0z" fill="#fff" stroke="none" /></Round>],
  ["远程", <Ic><rect width="24" height="24" rx="3" fill="#1489dd" stroke="none" /><path d="M4 8c3-3 7-1 7 3s4 6 7 4V3M15 6l3-3 3 3" stroke="#fff" strokeWidth="2" /><rect x="12" y="14" width="12" height="10" fill="#f7b23b" stroke="none" /><path d="M15 19h6" stroke="#7a4a08" strokeWidth="2" /></Ic>],
  ["电脑管家", <Ic><path d="M12 1l11 3v6c0 6-4 10-11 13C5 20 1 16 1 10V4z" fill="#fff" stroke="none" /><path d="M12 3.500l9 2V10c0 5-3 8-9 10.500C6 18 3 15 3 10V5.500z" fill="#1c6ef0" stroke="none" /><path d="M6 9l6 5 6-5" stroke="#fff" strokeWidth="2.500" /></Ic>],
  ["提醒", <Ic><path d="M12 2c6 1 7 5 7 9s1 6 3 8H2c2-2 3-4 3-8s1-8 7-9zM9 20h6c0 3-6 3-6 0z" fill="#fff" stroke="none" /></Ic>],
  ["QQ 1", <Penguin pink />], ["QQ 2", <Penguin pink />], ["QQ 3", <Penguin />], ["QQ 4", <Penguin />],
  ["360安全卫士", <Round bg="#f4d921"><path d="M1 8A12 12 0 0 1 22 5c-6-2-15-2-21 3zM23 16A12 12 0 0 1 2 19c6 2 15 2 21-3z" fill="#1fa64a" stroke="none" /><path d="M12 7v10M7 12h10" stroke="#109a3a" strokeWidth="3.500" /></Round>],
  ["设备管家", <Ic><rect width="24" height="24" rx="4" fill="#4a9cf5" stroke="none" /><path d="M7.500 4h9l4.500 8-4.500 8h-9L3 12z" stroke="#fff" /><path d="M9 7.500h6l2.500 4.500-2.500 4.500H9L6.500 12z" stroke="#fff" /><circle cx="12" cy="12" r="2.500" stroke="#fff" /></Ic>],
  ["NVIDIA", <Ic><rect x="1" y="4" width="22" height="16" fill="#5c9310" stroke="none" /><path d="M1 4h8v16H1z" fill="#2b3a12" stroke="none" /><path d="M2 12c5-8 13-6 17 0-4 5-12 6-17 0zM6 12c2-4 8-4 10 0-2 3-8 3-10 0z" stroke="#76b900" strokeWidth="1.500" fill="#2f4a0a" /></Ic>],
  ["蓝牙", <Ic><rect x="3" width="18" height="24" rx="8" fill="#0b7ae6" stroke="none" /><path d="M7.500 8l9 8-4.500 4V4l4.500 4-9 8" stroke="#fff" /></Ic>],
  ["电池", <Ic><path d="M1 5v3c0 4 5 4 5 0V5zM2 2v3M5 2v3M3.500 11v5" stroke="#fff" /><rect x="7" y="7" width="16" height="11" fill="#fff" stroke="none" /><path d="M24 10v5" stroke="#fff" strokeWidth="2" /></Ic>],
  ["网络", <Ic cls="text-[#d5d9dc]"><path d="M3 21C4 12 11 5 21 4M8 21c1-7 6-12 13-12M13 21c0-4 3-7 8-7" /><circle cx="18.500" cy="20" r="2" fill="#fff" stroke="none" /></Ic>],
  ["音量", <Ic cls="text-white"><path d="M1 9h4l5-5v17l-5-5H1zM14 9c1.500 2 1.500 5 0 7" /><path d="M17 6c3 4 3 9 0 13M20 4c4 5 4 12 0 17" opacity=".55" /></Ic>],
];

function Taskbar() {
  return (
    <footer className="flex h-[60px] shrink-0 overflow-hidden bg-[linear-gradient(90deg,#24323b_0%,#25333c_52%,#2b2b2b_72%,#2b2b2b_78%,#1f2d36_88%,#1f2c35_100%)] text-white">
      {apps.map((a) => (
        <button key={a.name} type="button" aria-label={a.name} className={"flex shrink-0 flex-col items-center " + a.w + (a.active ? " bg-[#525e66]" : "")}>
          <span className="flex flex-1 items-center pt-[1px]">{a.icon}</span>
          {a.running && <span className={"-mt-[3px] h-[3px] bg-[#76b4e6] " + (a.active ? "w-full" : "w-[61px]")} />}
        </button>
      ))}

      <div className="ml-auto flex shrink-0 items-center">
        <div className="relative mr-[3px] flex w-[72px] flex-col items-center leading-[26px] font-normal">
          <span>71℃</span>
          <span className="whitespace-nowrap">CPU温度</span>
          <svg width="36" height="26" viewBox="0 0 36 26" fill="none" stroke="#fff" strokeWidth="1.800" className="absolute top-[12px] left-[18px]" aria-hidden="true">
            <path d="M1 1h30v22H1zM5 7h22v14M8 10h9v9H8zM31 5h4v20H10M20 12h7" />
          </svg>
        </div>
        {tray.map(([name, icon]) => (
          <button key={name} type="button" aria-label={name} className="flex w-9 shrink-0 justify-center">{icon}</button>
        ))}
        <button type="button" aria-label="输入法" className="flex w-9 shrink-0 justify-center text-[18px] font-medium">中</button>
        <button type="button" aria-label="Q助手" className="ml-[6px] flex w-9 shrink-0 justify-center">
          <Ic><rect width="24" height="24" rx="4" fill="#3f8cf5" stroke="none" /><circle cx="12" cy="11.500" r="6" stroke="#fff" strokeWidth="2.800" /><path d="M14 15l3 3" stroke="#fff" strokeWidth="2.500" /><circle cx="18.500" cy="18.500" r="2" fill="#5fd36a" stroke="none" /></Ic>
        </button>
        <div className="ml-4 flex w-[102px] shrink-0 flex-col items-center text-[19px] leading-[25px] font-normal">
          <time className="whitespace-nowrap">16:34 周一</time>
          <time>2021/8/30</time>
        </div>
        <button type="button" aria-label="通知" className="ml-[23px]"><Ic w={25} h={24}><path d="M5 1h19v22H5zM5 4H1v17l4 2M9 7h11M9 12h11M9 17h7" /></Ic></button>
        <span className="mr-[7px] ml-[18px] h-[60px] w-px bg-[#6f7a81]" />
      </div>
    </footer>
  );
}

export default function App() {
  return (
    <div className="flex h-screen flex-col overflow-hidden bg-white font-[Noto_Sans,Noto_Sans_CJK_SC,sans-serif] text-[18px] leading-6 font-light">
      <TitleBar />
      <MenuRow />
      <Ribbon />
      <Workspace />
      <StatusBar />
      <Taskbar />
    </div>
  );
}
